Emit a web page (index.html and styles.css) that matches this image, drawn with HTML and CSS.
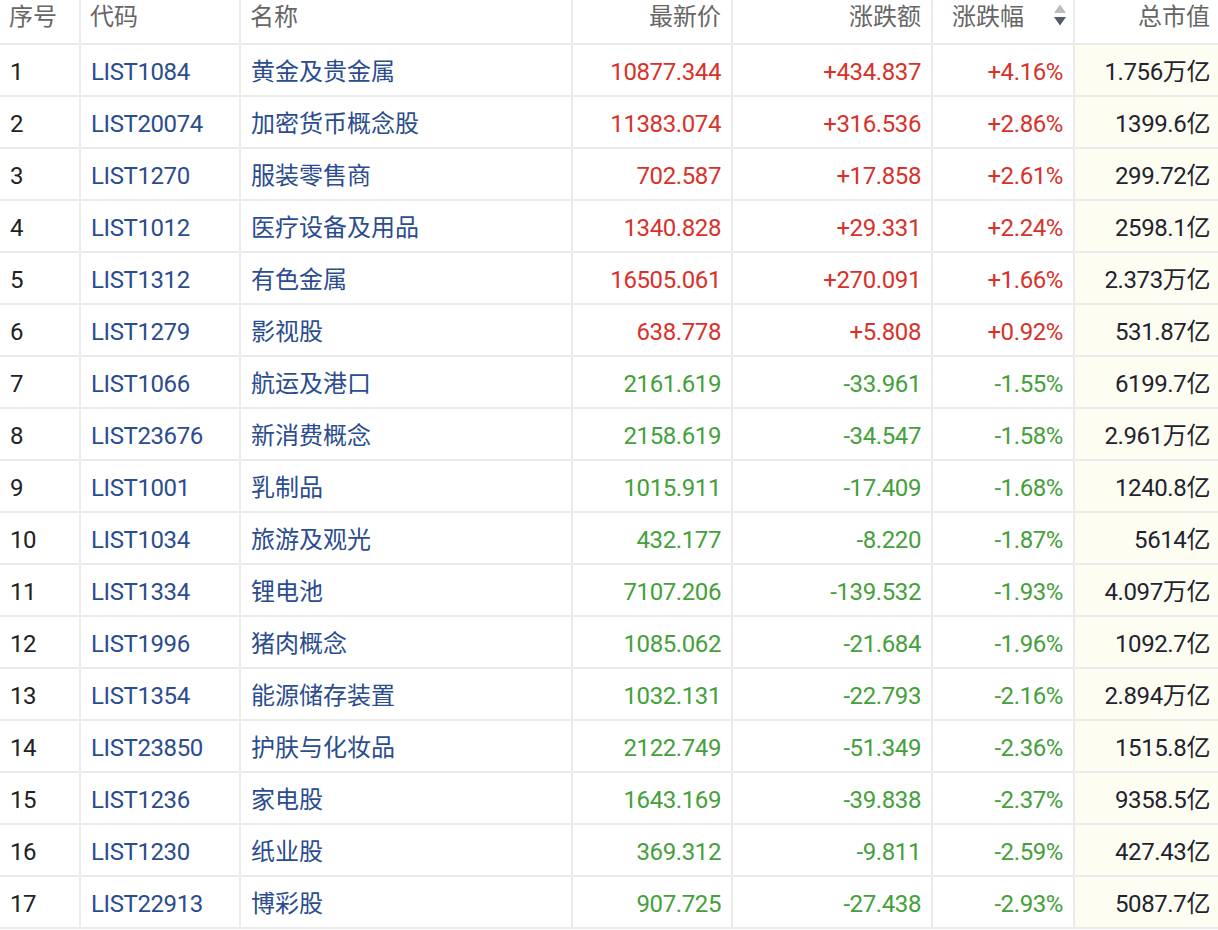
FILE: index.html
```html
<!DOCTYPE html>
<html lang="zh">
<head>
<meta charset="utf-8">
<title>板块行情</title>
<link rel="stylesheet" href="styles.css">
</head>
<body>
<table class="quote-table">
  <colgroup>
    <col class="c-idx"><col class="c-code"><col class="c-name"><col class="c-price"><col class="c-chg"><col class="c-pct"><col class="c-cap">
  </colgroup>
  <thead>
    <tr>
      <th class="left">序号</th>
      <th class="left">代码</th>
      <th class="left">名称</th>
      <th class="right">最新价</th>
      <th class="right">涨跌额</th>
      <th class="right sortable"><span class="th-label">涨跌幅</span><svg class="sort" width="14" height="24" viewBox="0 0 14 24"><path d="M7 1.5 L13 10 L1 10 Z" fill="#bdbdbd"/><path d="M1 14 L13 14 L7 22.5 Z" fill="#565b68"/></svg></th>
      <th class="right last">总市值</th>
    </tr>
  </thead>
  <tbody>
    <tr class="up"><td class="idx">1</td><td class="code">LIST1084</td><td class="name">黄金及贵金属</td><td class="num">10877.344</td><td class="num">+434.837</td><td class="num">+4.16%</td><td class="cap">1.756万亿</td></tr>
    <tr class="up"><td class="idx">2</td><td class="code">LIST20074</td><td class="name">加密货币概念股</td><td class="num">11383.074</td><td class="num">+316.536</td><td class="num">+2.86%</td><td class="cap">1399.6亿</td></tr>
    <tr class="up"><td class="idx">3</td><td class="code">LIST1270</td><td class="name">服装零售商</td><td class="num">702.587</td><td class="num">+17.858</td><td class="num">+2.61%</td><td class="cap">299.72亿</td></tr>
    <tr class="up"><td class="idx">4</td><td class="code">LIST1012</td><td class="name">医疗设备及用品</td><td class="num">1340.828</td><td class="num">+29.331</td><td class="num">+2.24%</td><td class="cap">2598.1亿</td></tr>
    <tr class="up"><td class="idx">5</td><td class="code">LIST1312</td><td class="name">有色金属</td><td class="num">16505.061</td><td class="num">+270.091</td><td class="num">+1.66%</td><td class="cap">2.373万亿</td></tr>
    <tr class="up"><td class="idx">6</td><td class="code">LIST1279</td><td class="name">影视股</td><td class="num">638.778</td><td class="num">+5.808</td><td class="num">+0.92%</td><td class="cap">531.87亿</td></tr>
    <tr class="down"><td class="idx">7</td><td class="code">LIST1066</td><td class="name">航运及港口</td><td class="num">2161.619</td><td class="num">-33.961</td><td class="num">-1.55%</td><td class="cap">6199.7亿</td></tr>
    <tr class="down"><td class="idx">8</td><td class="code">LIST23676</td><td class="name">新消费概念</td><td class="num">2158.619</td><td class="num">-34.547</td><td class="num">-1.58%</td><td class="cap">2.961万亿</td></tr>
    <tr class="down"><td class="idx">9</td><td class="code">LIST1001</td><td class="name">乳制品</td><td class="num">1015.911</td><td class="num">-17.409</td><td class="num">-1.68%</td><td class="cap">1240.8亿</td></tr>
    <tr class="down"><td class="idx">10</td><td class="code">LIST1034</td><td class="name">旅游及观光</td><td class="num">432.177</td><td class="num">-8.220</td><td class="num">-1.87%</td><td class="cap">5614亿</td></tr>
    <tr class="down"><td class="idx">11</td><td class="code">LIST1334</td><td class="name">锂电池</td><td class="num">7107.206</td><td class="num">-139.532</td><td class="num">-1.93%</td><td class="cap">4.097万亿</td></tr>
    <tr class="down"><td class="idx">12</td><td class="code">LIST1996</td><td class="name">猪肉概念</td><td class="num">1085.062</td><td class="num">-21.684</td><td class="num">-1.96%</td><td class="cap">1092.7亿</td></tr>
    <tr class="down"><td class="idx">13</td><td class="code">LIST1354</td><td class="name">能源储存装置</td><td class="num">1032.131</td><td class="num">-22.793</td><td class="num">-2.16%</td><td class="cap">2.894万亿</td></tr>
    <tr class="down"><td class="idx">14</td><td class="code">LIST23850</td><td class="name">护肤与化妆品</td><td class="num">2122.749</td><td class="num">-51.349</td><td class="num">-2.36%</td><td class="cap">1515.8亿</td></tr>
    <tr class="down"><td class="idx">15</td><td class="code">LIST1236</td><td class="name">家电股</td><td class="num">1643.169</td><td class="num">-39.838</td><td class="num">-2.37%</td><td class="cap">9358.5亿</td></tr>
    <tr class="down"><td class="idx">16</td><td class="code">LIST1230</td><td class="name">纸业股</td><td class="num">369.312</td><td class="num">-9.811</td><td class="num">-2.59%</td><td class="cap">427.43亿</td></tr>
    <tr class="down"><td class="idx">17</td><td class="code">LIST22913</td><td class="name">博彩股</td><td class="num">907.725</td><td class="num">-27.438</td><td class="num">-2.93%</td><td class="cap">5087.7亿</td></tr>
  </tbody>
</table>
</body>
</html>
```

FILE: styles.css
```css
* { box-sizing: border-box; }
html, body {
  margin: 0;
  padding: 0;
  background: #ffffff;
}
body {
  font-family: "Roboto", "Noto Sans CJK SC", sans-serif;
  overflow: hidden;
}
.quote-table {
  table-layout: fixed;
  width: 1218px;
  border-collapse: separate;
  border-spacing: 0;
  font-size: 24px;
  letter-spacing: -0.4px;
}
.c-idx { width: 81px; }
.c-code { width: 160px; }
.c-name { width: 332px; }
.c-price { width: 160px; }
.c-chg { width: 200px; }
.c-pct { width: 142px; }
.c-cap { width: 143px; }

.quote-table th,
.quote-table td {
  border-right: 2px solid #ebebeb;
  border-bottom: 2px solid #ebebeb;
  padding: 0 10px 0 10px;
  white-space: nowrap;
  overflow: hidden;
}
.quote-table th:last-child,
.quote-table td:last-child {
  border-right: none;
  padding-right: 8px;
}
.quote-table th {
  height: 45px;
  font-weight: normal;
  color: #666666;
  vertical-align: top;
  padding-top: 2px;
  line-height: 30px;
  letter-spacing: 0;
}
.quote-table th.left { text-align: left; padding-left: 9px; }
.quote-table th.right { text-align: right; }
.quote-table th.sortable {
  padding-right: 6px;
}
.th-label {
  display: inline-block;
  vertical-align: top;
}
.sort {
  display: inline-block;
  vertical-align: top;
  margin-top: 1px;
  margin-left: 29px;
}
.quote-table td {
  height: 52px;
  line-height: 30px;
  padding-top: 3px;
  vertical-align: middle;
}
.idx { color: #222222; padding-left: 12px; }
.code { color: #2b4c8f; }
.name { color: #2b4c8f; letter-spacing: 0; }
.num { text-align: right; }
.cap {
  text-align: right;
  color: #1f2330;
  background: #fdfdf1;
}
.up .num { color: #d8312a; }
.down .num { color: #44a03a; }
```
